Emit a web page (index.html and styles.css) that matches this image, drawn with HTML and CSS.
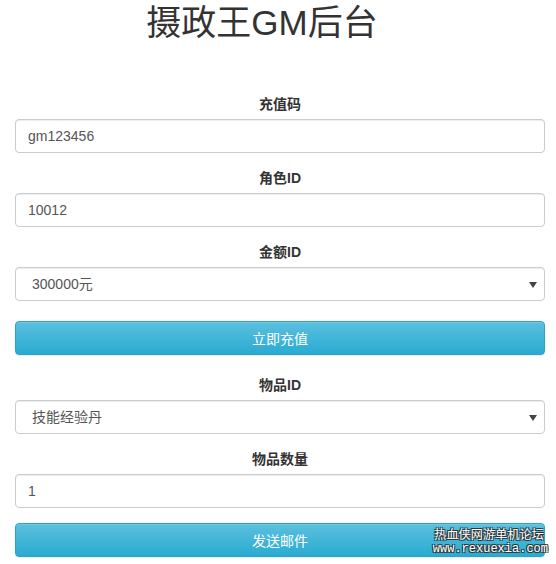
FILE: index.html
```html
<!DOCTYPE html>
<html>
<head>
  <meta charset="utf-8">
  <title>摄政王GM后台</title>
  <link rel="stylesheet" href="styles.css">
</head>
<body>

<div class="container">
  <h1 class="title">摄政王GM后台</h1>

  <form class="gm-form">
    <div class="form-group">
      <label for="code">充值码</label>
      <input class="form-control" id="code" type="text" value="gm123456">
    </div>
    <div class="form-group">
      <label for="role">角色ID</label>
      <input class="form-control" id="role" type="text" value="10012">
    </div>
    <div class="form-group">
      <label for="amount">金额ID</label>
      <div class="select-wrap">
        <select class="form-control" id="amount">
          <option>300000元</option>
        </select>
      </div>
    </div>
    <button class="btn btn-info btn-pay" type="button">立即充值</button>
  </form>

  <form class="gm-form">
    <div class="form-group">
      <label for="item">物品ID</label>
      <div class="select-wrap">
        <select class="form-control" id="item">
          <option>技能经验丹</option>
        </select>
      </div>
    </div>
    <div class="form-group">
      <label for="count">物品数量</label>
      <input class="form-control" id="count" type="text" value="1">
    </div>
    <button class="btn btn-info" type="button">发送邮件</button>
  </form>
</div>

<div class="watermark">
  <div class="wm-name">热血侠网游单机论坛</div>
  <div class="wm-url">www.rexuexia.com</div>
</div>

</body>
</html>
```

FILE: styles.css
```css
body {
  margin: 0;
  font-family: "Liberation Sans", Arial, "Noto Sans CJK SC", sans-serif;
  font-size: 14px;
  line-height: 1.42857;
  color: #333;
  background: #fff;
}

.container {
  padding: 0 11px 0 15px;
  height: 564px;
  overflow: hidden;
}

.title {
  margin: 0 0 48px;
  padding-right: 36px;
  font-size: 35px;
  font-weight: normal;
  line-height: 46px;
  text-align: center;
  color: #333;
}

.gm-form {
  margin: 0 0 20px;
}

.form-group {
  margin-bottom: 15px;
}

.form-group label {
  display: block;
  margin-bottom: 5px;
  font-weight: bold;
  text-align: center;
  line-height: 20px;
}

.form-control {
  display: block;
  box-sizing: border-box;
  width: 100%;
  height: 34px;
  padding: 6px 12px;
  font-family: inherit;
  font-size: 14px;
  color: #555;
  background: #fff;
  border: 1px solid #ccc;
  border-radius: 4px;
  box-shadow: inset 0 1px 1px rgba(0, 0, 0, 0.075);
  outline: none;
}

select.form-control {
  -webkit-appearance: none;
  appearance: none;
  padding-left: 16px;
}

.select-wrap {
  position: relative;
}

/* small filled arrow on the right of each select */
.select-wrap::after {
  content: "";
  position: absolute;
  right: 8px;
  top: 15px;
  border-left: 4px solid transparent;
  border-right: 4px solid transparent;
  border-top: 6px solid #444;
  pointer-events: none;
}

.btn {
  display: block;
  box-sizing: border-box;
  width: 100%;
  height: 34px;
  padding: 6px 12px;
  font-family: inherit;
  font-size: 14px;
  color: #fff;
  border: 1px solid #28a4c9;
  border-radius: 4px;
  cursor: pointer;
}

.btn-info {
  background-image: linear-gradient(to bottom, #5bc0de 0, #2aabd2 100%);
  box-shadow: inset 0 1px 0 rgba(255, 255, 255, 0.15), 0 1px 1px rgba(0, 0, 0, 0.075);
}

/* margins collapse with the group above, so this sets the full gap */
.btn-pay {
  margin-top: 20px;
}

.watermark {
  position: absolute;
  right: 8px;
  bottom: 9px;
  color: #fff;
  text-align: right;
  text-shadow: 1px 1px 0 #333, -1px -1px 0 #333, 1px -1px 0 #333, -1px 1px 0 #333;
}

.wm-name {
  font-family: "Noto Sans CJK SC", sans-serif;
  font-size: 12px;
  line-height: 12px;
  margin: 0 4px 3px 0;
  letter-spacing: 0.2px;
}

.wm-url {
  font-family: "Liberation Mono", monospace;
  font-size: 12px;
  line-height: 12px;
}
```
